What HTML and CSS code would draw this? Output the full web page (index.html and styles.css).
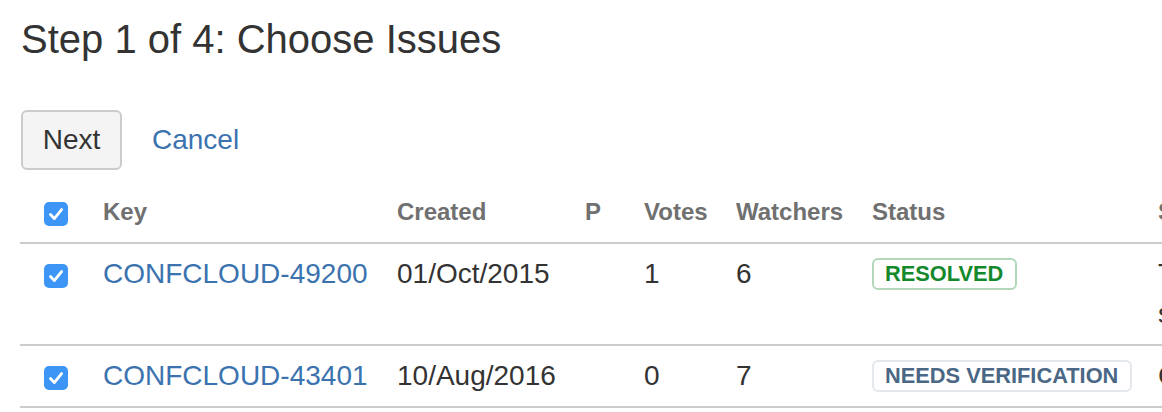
FILE: index.html
```html
<!DOCTYPE html>
<html>
<head>
<meta charset="utf-8">
<title>Step 1 of 4: Choose Issues</title>
<link rel="stylesheet" href="styles.css">
</head>
<body>
<h1 class="title">Step 1 of 4: Choose Issues</h1>
<div class="actions">
  <button class="btn" type="button">Next</button>
  <a class="cancel" href="#">Cancel</a>
</div>
<table class="issues">
  <colgroup>
    <col class="c-check"><col class="c-key"><col class="c-created"><col class="c-p"><col class="c-votes"><col class="c-watchers"><col class="c-status"><col class="c-summary">
  </colgroup>
  <thead>
    <tr>
      <th class="cb-cell"><span class="cb"><svg viewBox="0 0 24 24" width="24" height="24"><rect width="24" height="24" rx="5" fill="#3d95f6"/><path d="M6.5 12.5 L10.3 16.6 L17.6 7.6" fill="none" stroke="#fff" stroke-width="2.8" stroke-linecap="round" stroke-linejoin="round"/></svg></span></th>
      <th>Key</th>
      <th>Created</th>
      <th>P</th>
      <th>Votes</th>
      <th>Watchers</th>
      <th>Status</th>
      <th>Summary</th>
    </tr>
  </thead>
  <tbody>
    <tr>
      <td class="cb-cell"><span class="cb"><svg viewBox="0 0 24 24" width="24" height="24"><rect width="24" height="24" rx="5" fill="#3d95f6"/><path d="M6.5 12.5 L10.3 16.6 L17.6 7.6" fill="none" stroke="#fff" stroke-width="2.8" stroke-linecap="round" stroke-linejoin="round"/></svg></span></td>
      <td><a class="key" href="#">CONFCLOUD-49200</a></td>
      <td>01/Oct/2015</td>
      <td></td>
      <td>1</td>
      <td>6</td>
      <td><span class="lozenge resolved">RESOLVED</span></td>
      <td class="summary">Tables lose formatting<br>some pasted content</td>
    </tr>
    <tr>
      <td class="cb-cell"><span class="cb"><svg viewBox="0 0 24 24" width="24" height="24"><rect width="24" height="24" rx="5" fill="#3d95f6"/><path d="M6.5 12.5 L10.3 16.6 L17.6 7.6" fill="none" stroke="#fff" stroke-width="2.8" stroke-linecap="round" stroke-linejoin="round"/></svg></span></td>
      <td><a class="key" href="#">CONFCLOUD-43401</a></td>
      <td>10/Aug/2016</td>
      <td></td>
      <td>0</td>
      <td>7</td>
      <td><span class="lozenge verify">NEEDS VERIFICATION</span></td>
      <td class="summary">Cannot edit page</td>
    </tr>
  </tbody>
</table>
</body>
</html>
```

FILE: styles.css
```css
html, body {
  overflow: hidden;
}
body {
  margin: 0;
  padding: 0 0 0 20px;
  font-family: "Liberation Sans", Arial, Helvetica, sans-serif;
  color: #333333;
  background: #ffffff;
}
.title {
  margin: 15px 0 47px 1px;
  font-size: 40px;
  line-height: 48px;
  font-weight: normal;
  color: #333333;
}
.actions {
  display: flex;
  align-items: center;
  height: 60px;
}
.btn {
  box-sizing: border-box;
  height: 60px;
  width: 101px;
  margin: 0 0 0 1px;
  padding: 0;
  border: 2px solid #cccccc;
  border-radius: 6px;
  background: #f4f4f4;
  font-family: inherit;
  font-size: 28px;
  line-height: 40px;
  color: #333333;
}
.cancel {
  margin-left: 30px;
  font-size: 28px;
  line-height: 40px;
  color: #3b73af;
  text-decoration: none;
}
.issues {
  margin-top: 12px;
  table-layout: fixed;
  width: 1538px;
  border-collapse: collapse;
  font-size: 28px;
  line-height: 40px;
}
.c-check { width: 83px; }
.c-key { width: 294px; }
.c-created { width: 188px; }
.c-p { width: 59px; }
.c-votes { width: 92px; }
.c-watchers { width: 136px; }
.c-status { width: 286px; }
.c-summary { width: 400px; }
.issues th,
.issues td {
  padding: 10px 0;
  text-align: left;
  vertical-align: top;
  border-bottom: 2px solid #cccccc;
  white-space: nowrap;
  overflow: hidden;
}
.issues th {
  font-size: 24px;
  font-weight: bold;
  color: #707070;
}
.issues td {
  color: #333333;
}
.issues .cb-cell {
  padding-left: 24px;
}
.cb {
  display: block;
  width: 24px;
  height: 24px;
  margin-top: 10px;
}
.cb svg {
  display: block;
}
.key {
  color: #3b73af;
  text-decoration: none;
}
.lozenge {
  display: inline-block;
  vertical-align: top;
  box-sizing: border-box;
  height: 32px;
  margin-top: 4px;
  padding: 0 12px 0 11px;
  border: 2px solid;
  border-radius: 6px;
  font-size: 21.8px;
  line-height: 28px;
  font-weight: bold;
}
.resolved {
  color: #14892c;
  border-color: #b2d8b9;
}
.verify {
  color: #4a6785;
  border-color: #e4e8ed;
}
```
